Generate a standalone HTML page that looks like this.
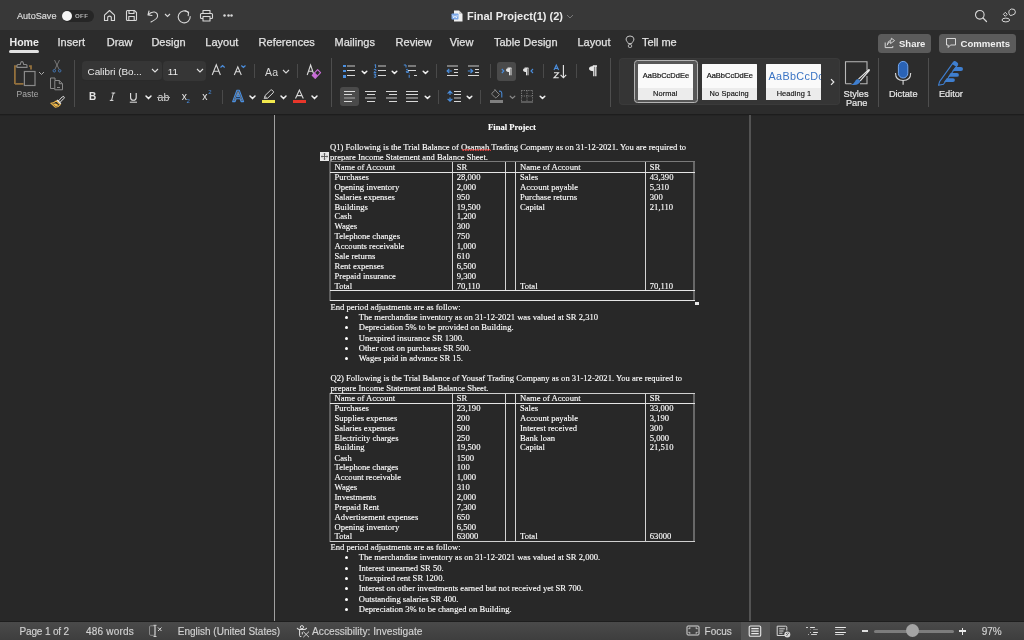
<!DOCTYPE html>
<html><head><meta charset="utf-8"><style>
*{box-sizing:border-box}
html,body{margin:0;padding:0;width:1024px;height:640px;overflow:hidden;background:#282828;font-family:"Liberation Sans",sans-serif}
.a{position:absolute}
.d{position:absolute;white-space:pre;font:8.6px/10px "Liberation Serif",serif;color:#ffffff;-webkit-text-stroke:0.12px #ffffff}
.ln{position:absolute}
.s{position:absolute;white-space:pre;font-family:"Liberation Sans",sans-serif;color:#e8e8e8}
svg{position:absolute;overflow:visible}
</style></head><body>
<div style="position:absolute;left:0;top:0;width:1024px;height:640px;will-change:transform">
<div class="a" style="left:0;top:0;width:1024px;height:30px;background:#383838"></div>
<div class="a" style="left:0;top:30px;width:1024px;height:84px;background:#2c2c2c"></div>
<div class="a" style="left:0;top:114px;width:1024px;height:1px;background:#1d1d1d"></div>
<div class="a" style="left:0;top:115px;width:1024px;height:1px;background:#242424"></div>
<div class="a" style="left:274px;top:115px;width:1px;height:506px;background:#a0a0a0"></div>
<div class="a" style="left:749px;top:115px;width:2px;height:506px;background:#535353"></div>
<div class="a" style="left:0;top:621px;width:1024px;height:1px;background:#1e1e1e"></div>
<div class="a" style="left:0;top:622px;width:1024px;height:18px;background:linear-gradient(#4a4a4a,#3e3e3e)"></div>
<div class="d" style="left:488px;top:122px;font-weight:bold">Final Project</div>
<div class="d" style="left:330px;top:142px;">Q1) Following is the Trial Balance of Osamah Trading Company as on 31-12-2021. You are required to</div>
<div class="d" style="left:330px;top:152px;">prepare Income Statement and Balance Sheet.</div>
<svg style="position:absolute;left:462px;top:147.5px" width="30" height="4" viewBox="0 0 30 4"><path d="M0 1 L1.25 3 L2.50 1 L3.75 3 L5.00 1 L6.25 3 L7.50 1 L8.75 3 L10.00 1 L11.25 3 L12.50 1 L13.75 3 L15.00 1 L16.25 3 L17.50 1 L18.75 3 L20.00 1 L21.25 3 L22.50 1 L23.75 3 L25.00 1 L26.25 3 L27.50 1 L28.75 3" fill="none" stroke="#e8403c" stroke-width="0.9"/></svg>
<div class="d" style="left:334.5px;top:162px;">Name of Account</div>
<div class="d" style="left:456.8px;top:162px;">SR</div>
<div class="d" style="left:520px;top:162px;">Name of Account</div>
<div class="d" style="left:649.8px;top:162px;">SR</div>
<div class="d" style="left:334.5px;top:172px;">Purchases</div>
<div class="d" style="left:456.8px;top:172px;">28,000</div>
<div class="d" style="left:334.5px;top:182px;">Opening inventory</div>
<div class="d" style="left:456.8px;top:182px;">2,000</div>
<div class="d" style="left:334.5px;top:192px;">Salaries expenses</div>
<div class="d" style="left:456.8px;top:192px;">950</div>
<div class="d" style="left:334.5px;top:202px;">Buildings</div>
<div class="d" style="left:456.8px;top:202px;">19,500</div>
<div class="d" style="left:334.5px;top:211px;">Cash</div>
<div class="d" style="left:456.8px;top:211px;">1,200</div>
<div class="d" style="left:334.5px;top:221px;">Wages</div>
<div class="d" style="left:456.8px;top:221px;">300</div>
<div class="d" style="left:334.5px;top:231px;">Telephone changes</div>
<div class="d" style="left:456.8px;top:231px;">750</div>
<div class="d" style="left:334.5px;top:241px;">Accounts receivable</div>
<div class="d" style="left:456.8px;top:241px;">1,000</div>
<div class="d" style="left:334.5px;top:251px;">Sale returns</div>
<div class="d" style="left:456.8px;top:251px;">610</div>
<div class="d" style="left:334.5px;top:261px;">Rent expenses</div>
<div class="d" style="left:456.8px;top:261px;">6,500</div>
<div class="d" style="left:334.5px;top:271px;">Prepaid insurance</div>
<div class="d" style="left:456.8px;top:271px;">9,300</div>
<div class="d" style="left:334.5px;top:281px;">Total</div>
<div class="d" style="left:456.8px;top:281px;">70,110</div>
<div class="d" style="left:520px;top:172px;">Sales</div>
<div class="d" style="left:649.8px;top:172px;">43,390</div>
<div class="d" style="left:520px;top:182px;">Account payable</div>
<div class="d" style="left:649.8px;top:182px;">5,310</div>
<div class="d" style="left:520px;top:192px;">Purchase returns</div>
<div class="d" style="left:649.8px;top:192px;">300</div>
<div class="d" style="left:520px;top:202px;">Capital</div>
<div class="d" style="left:649.8px;top:202px;">21,110</div>
<div class="d" style="left:520px;top:281px;">Total</div>
<div class="d" style="left:649.8px;top:281px;">70,110</div>
<div class="ln" style="left:330px;top:161px;width:365px;height:1px;background:#7a7a7a;z-index:1"></div>
<div class="ln" style="left:330px;top:172px;width:365px;height:1px;background:#e6e6e6;z-index:1"></div>
<div class="ln" style="left:330px;top:290px;width:365px;height:1px;background:#e6e6e6;z-index:1"></div>
<div class="ln" style="left:330px;top:300px;width:365px;height:1px;background:#e6e6e6;z-index:1"></div>
<div class="ln" style="left:329px;top:161px;width:2px;height:140px;background:#5e5e5e"></div>
<div class="ln" style="left:693px;top:161px;width:2px;height:140px;background:#686868"></div>
<div class="ln" style="left:452px;top:162px;width:1px;height:128px;background:#d4d4d4"></div>
<div class="ln" style="left:505px;top:162px;width:1px;height:128px;background:#d4d4d4"></div>
<div class="ln" style="left:515px;top:162px;width:1px;height:128px;background:#d4d4d4"></div>
<div class="ln" style="left:645px;top:162px;width:1px;height:128px;background:#d4d4d4"></div>
<div class="ln" style="left:320px;top:152px;width:9px;height:9px;background:#e8e8e8"></div>
<svg style="position:absolute;left:320px;top:152px" width="9" height="9" viewBox="0 0 9 9"><path d="M4.5 1.3 V7.7 M1.3 4.5 H7.7" stroke="#555" stroke-width="0.9"/><path d="M3.5 2.3 L4.5 1.2 L5.5 2.3 M3.5 6.7 L4.5 7.8 L5.5 6.7 M2.3 3.5 L1.2 4.5 L2.3 5.5 M6.7 3.5 L7.8 4.5 L6.7 5.5" fill="none" stroke="#555" stroke-width="0.7"/></svg>
<div class="ln" style="left:695px;top:301.5px;width:3.5px;height:3.5px;background:#e8e8e8"></div>
<div class="d" style="left:330.5px;top:302px;">End period adjustments are as follow:</div>
<div class="ln" style="left:344.9px;top:315.9px;width:3.6px;height:3.6px;border-radius:50%;background:#fff"></div>
<div class="d" style="left:358.7px;top:312px;">The merchandise inventory as on 31-12-2021 was valued at SR 2,310</div>
<div class="ln" style="left:344.9px;top:325.9px;width:3.6px;height:3.6px;border-radius:50%;background:#fff"></div>
<div class="d" style="left:358.7px;top:322px;">Depreciation 5% to be provided on Building.</div>
<div class="ln" style="left:344.9px;top:336.9px;width:3.6px;height:3.6px;border-radius:50%;background:#fff"></div>
<div class="d" style="left:358.7px;top:333px;">Unexpired insurance SR 1300.</div>
<div class="ln" style="left:344.9px;top:346.9px;width:3.6px;height:3.6px;border-radius:50%;background:#fff"></div>
<div class="d" style="left:358.7px;top:343px;">Other cost on purchases SR 500.</div>
<div class="ln" style="left:344.9px;top:356.9px;width:3.6px;height:3.6px;border-radius:50%;background:#fff"></div>
<div class="d" style="left:358.7px;top:353px;">Wages paid in advance SR 15.</div>
<div class="d" style="left:330.5px;top:373px;">Q2) Following is the Trial Balance of Yousaf Trading Company as on 31-12-2021. You are required to</div>
<div class="d" style="left:330.5px;top:383px;">prepare Income Statement and Balance Sheet.</div>
<div class="d" style="left:334.5px;top:393px;">Name of Account</div>
<div class="d" style="left:456.8px;top:393px;">SR</div>
<div class="d" style="left:520px;top:393px;">Name of Account</div>
<div class="d" style="left:649.8px;top:393px;">SR</div>
<div class="d" style="left:334.5px;top:403px;">Purchases</div>
<div class="d" style="left:456.8px;top:403px;">23,190</div>
<div class="d" style="left:334.5px;top:413px;">Supplies expenses</div>
<div class="d" style="left:456.8px;top:413px;">200</div>
<div class="d" style="left:334.5px;top:423px;">Salaries expenses</div>
<div class="d" style="left:456.8px;top:423px;">500</div>
<div class="d" style="left:334.5px;top:433px;">Electricity charges</div>
<div class="d" style="left:456.8px;top:433px;">250</div>
<div class="d" style="left:334.5px;top:442px;">Building</div>
<div class="d" style="left:456.8px;top:442px;">19,500</div>
<div class="d" style="left:334.5px;top:453px;">Cash</div>
<div class="d" style="left:456.8px;top:453px;">1500</div>
<div class="d" style="left:334.5px;top:462px;">Telephone charges</div>
<div class="d" style="left:456.8px;top:462px;">100</div>
<div class="d" style="left:334.5px;top:472px;">Account receivable</div>
<div class="d" style="left:456.8px;top:472px;">1,000</div>
<div class="d" style="left:334.5px;top:482px;">Wages</div>
<div class="d" style="left:456.8px;top:482px;">310</div>
<div class="d" style="left:334.5px;top:492px;">Investments</div>
<div class="d" style="left:456.8px;top:492px;">2,000</div>
<div class="d" style="left:334.5px;top:502px;">Prepaid Rent</div>
<div class="d" style="left:456.8px;top:502px;">7,300</div>
<div class="d" style="left:334.5px;top:512px;">Advertisement expenses</div>
<div class="d" style="left:456.8px;top:512px;">650</div>
<div class="d" style="left:334.5px;top:522px;">Opening inventory</div>
<div class="d" style="left:456.8px;top:522px;">6,500</div>
<div class="d" style="left:334.5px;top:531px;">Total</div>
<div class="d" style="left:456.8px;top:531px;">63000</div>
<div class="d" style="left:520px;top:403px;">Sales</div>
<div class="d" style="left:649.8px;top:403px;">33,000</div>
<div class="d" style="left:520px;top:413px;">Account payable</div>
<div class="d" style="left:649.8px;top:413px;">3,190</div>
<div class="d" style="left:520px;top:423px;">Interest received</div>
<div class="d" style="left:649.8px;top:423px;">300</div>
<div class="d" style="left:520px;top:433px;">Bank loan</div>
<div class="d" style="left:649.8px;top:433px;">5,000</div>
<div class="d" style="left:520px;top:442px;">Capital</div>
<div class="d" style="left:649.8px;top:442px;">21,510</div>
<div class="d" style="left:520px;top:531px;">Total</div>
<div class="d" style="left:649.8px;top:531px;">63000</div>
<div class="ln" style="left:330px;top:393px;width:365px;height:1px;background:#d0d0d0;z-index:1"></div>
<div class="ln" style="left:330px;top:403px;width:365px;height:1px;background:#e6e6e6;z-index:1"></div>
<div class="ln" style="left:330px;top:541px;width:365px;height:1px;background:#d0d0d0;z-index:1"></div>
<div class="ln" style="left:329px;top:393px;width:2px;height:149px;background:#5e5e5e"></div>
<div class="ln" style="left:693px;top:393px;width:2px;height:149px;background:#686868"></div>
<div class="ln" style="left:452px;top:394px;width:1px;height:147px;background:#d4d4d4"></div>
<div class="ln" style="left:505px;top:394px;width:1px;height:147px;background:#d4d4d4"></div>
<div class="ln" style="left:515px;top:394px;width:1px;height:147px;background:#d4d4d4"></div>
<div class="ln" style="left:645px;top:394px;width:1px;height:147px;background:#d4d4d4"></div>
<div class="d" style="left:330.5px;top:542px;">End period adjustments are as follow:</div>
<div class="ln" style="left:344.9px;top:555.9000000000001px;width:3.6px;height:3.6px;border-radius:50%;background:#fff"></div>
<div class="d" style="left:358.7px;top:552px;">The merchandise inventory as on 31-12-2021 was valued at SR 2,000.</div>
<div class="ln" style="left:344.9px;top:566.9000000000001px;width:3.6px;height:3.6px;border-radius:50%;background:#fff"></div>
<div class="d" style="left:358.7px;top:563px;">Interest unearned SR 50.</div>
<div class="ln" style="left:344.9px;top:576.9000000000001px;width:3.6px;height:3.6px;border-radius:50%;background:#fff"></div>
<div class="d" style="left:358.7px;top:573px;">Unexpired rent SR 1200.</div>
<div class="ln" style="left:344.9px;top:586.9000000000001px;width:3.6px;height:3.6px;border-radius:50%;background:#fff"></div>
<div class="d" style="left:358.7px;top:583px;">Interest on other investments earned but not received yet SR 700.</div>
<div class="ln" style="left:344.9px;top:597.9000000000001px;width:3.6px;height:3.6px;border-radius:50%;background:#fff"></div>
<div class="d" style="left:358.7px;top:594px;">Outstanding salaries SR 400.</div>
<div class="ln" style="left:344.9px;top:607.9000000000001px;width:3.6px;height:3.6px;border-radius:50%;background:#fff"></div>
<div class="d" style="left:358.7px;top:604px;">Depreciation 3% to be changed on Building.</div>
<div class="s" style="left:17px;top:11px;font-size:9.1px;line-height:10px;color:#dadada;font-weight:normal;-webkit-text-stroke:0.2px #dadada">AutoSave</div>
<div class="a" style="left:62px;top:10px;width:32px;height:12px;background:#262626;border-radius:6px;"></div>
<div class="a" style="left:62.2px;top:11px;width:10px;height:10px;background:#f4f4f4;border-radius:5px;"></div>
<div class="s" style="left:75px;top:12.2px;font-size:6.1px;line-height:7px;color:#b8b8b8;font-weight:bold;letter-spacing:0.35px">OFF</div>
<svg style="left:103.3px;top:9px" width="13" height="13" viewBox="0 0 13 13"><path d="M1.5 6.2 L6.5 1.5 L11.5 6.2 V11.5 H8.3 V8 Q6.5 6.3 4.7 8 V11.5 H1.5 Z" fill="none" stroke="#d8d8d8" stroke-width="1.1" stroke-linejoin="round"/></svg>
<svg style="left:125px;top:9px" width="13" height="13" viewBox="0 0 13 13"><path d="M1.5 2.5 Q1.5 1.5 2.5 1.5 H9.5 L11.5 3.5 V10.5 Q11.5 11.5 10.5 11.5 H2.5 Q1.5 11.5 1.5 10.5 Z" fill="none" stroke="#d8d8d8" stroke-width="1.1"/><path d="M4 1.5 V4.5 H9 V1.5 M3.8 11.5 V7.5 H9.2 V11.5" fill="none" stroke="#d8d8d8" stroke-width="1.1"/></svg>
<svg style="left:146px;top:9px" width="14" height="14" viewBox="0 0 14 14"><path d="M3 2 L2 6 L6 6.5 M2.3 5.8 Q5 2.5 8.5 3 Q12 4 11.5 7.5 Q11 10 5 13" fill="none" stroke="#d8d8d8" stroke-width="1.1" stroke-linecap="round" stroke-linejoin="round"/></svg>
<svg style="left:164px;top:13px" width="7" height="5" viewBox="0 0 7 5"><path d="M1 1 L3.5 3.5 L6 1" fill="none" stroke="#d8d8d8" stroke-width="1.1"/></svg>
<svg style="left:177px;top:9px" width="15" height="14" viewBox="0 0 15 14"><path d="M11.2 3.4 A6 6 0 1 0 13.2 7.5" fill="none" stroke="#d8d8d8" stroke-width="1.1" stroke-linecap="round"/><path d="M8.3 1.8 L11.6 3.3 L11.2 6.6" fill="none" stroke="#d8d8d8" stroke-width="1.1" stroke-linecap="round" stroke-linejoin="round"/></svg>
<svg style="left:199px;top:9px" width="15" height="14" viewBox="0 0 15 14"><path d="M4 4.5 V1.5 H11 V4.5 M4 9.5 H2.5 Q1.5 9.5 1.5 8.5 V5.5 Q1.5 4.5 2.5 4.5 H12.5 Q13.5 4.5 13.5 5.5 V8.5 Q13.5 9.5 12.5 9.5 H11 M4 7.5 H11 V12 H4 Z" fill="none" stroke="#d8d8d8" stroke-width="1.1" stroke-linejoin="round"/></svg>
<svg style="left:223.0px;top:14.2px" width="3" height="3" viewBox="0 0 3 3"><circle cx="1.5" cy="1.5" r="1.25" fill="#d8d8d8"/></svg>
<svg style="left:226.7px;top:14.2px" width="3" height="3" viewBox="0 0 3 3"><circle cx="1.5" cy="1.5" r="1.25" fill="#d8d8d8"/></svg>
<svg style="left:230.4px;top:14.2px" width="3" height="3" viewBox="0 0 3 3"><circle cx="1.5" cy="1.5" r="1.25" fill="#d8d8d8"/></svg>
<svg style="left:451px;top:10px" width="12" height="12" viewBox="0 0 12 12"><path d="M3 0.5 H8 L11.5 4 V11.5 H3 Z" fill="#f0f0f0"/><path d="M8 0.5 V4 H11.5" fill="#c8c8c8"/><rect x="0.5" y="3.5" width="7" height="6" rx="0.8" fill="#7aa7e8"/><path d="M1.8 5 L2.6 8 L4 5.8 L5.4 8 L6.2 5" fill="none" stroke="#fff" stroke-width="0.7"/></svg>
<div class="s" style="left:467px;top:10px;font-size:11px;line-height:12px;color:#ececec;font-weight:bold;">Final Project(1) (2)</div>
<svg style="left:566px;top:14px" width="8" height="5" viewBox="0 0 8 5"><path d="M1 1 L4 4 L7 1" fill="none" stroke="#777" stroke-width="1"/></svg>
<svg style="left:974px;top:9px" width="14" height="14" viewBox="0 0 14 14"><circle cx="5.8" cy="5.8" r="4.3" fill="none" stroke="#d8d8d8" stroke-width="1.1"/><path d="M9 9 L12.5 12.5" stroke="#d8d8d8" stroke-width="1.2" stroke-linecap="round"/></svg>
<svg style="left:1001px;top:8px" width="16" height="16" viewBox="0 0 16 16"><path d="M4.3 4.3 L6.2 6.3 L4.3 8.3 L2.4 6.3 Z" fill="none" stroke="#d8d8d8" stroke-width="1"/><ellipse cx="4.8" cy="12" rx="3.8" ry="1.9" fill="none" stroke="#d8d8d8" stroke-width="1"/><path d="M8 5.5 Q7.2 2 10.5 1 Q14.2 0.5 14.4 3.8 Q14.5 6.6 11.5 7 L9.3 7.6 Z" fill="none" stroke="#d8d8d8" stroke-width="1" stroke-linejoin="round"/></svg>
<div class="s" style="left:9.5px;top:36px;font-size:10.6px;line-height:12px;color:#ececec;font-weight:bold;">Home</div>
<div class="a" style="left:9px;top:50px;width:30px;height:2.6px;background:#e2e2e2;border-radius:1.5px;"></div>
<div class="s" style="left:57.5px;top:36px;font-size:11px;line-height:12px;color:#e2e2e2;font-weight:normal;-webkit-text-stroke:0.25px #e2e2e2">Insert</div>
<div class="s" style="left:106.7px;top:36px;font-size:11px;line-height:12px;color:#e2e2e2;font-weight:normal;-webkit-text-stroke:0.25px #e2e2e2">Draw</div>
<div class="s" style="left:151.4px;top:36px;font-size:11px;line-height:12px;color:#e2e2e2;font-weight:normal;-webkit-text-stroke:0.25px #e2e2e2">Design</div>
<div class="s" style="left:205.3px;top:36px;font-size:11px;line-height:12px;color:#e2e2e2;font-weight:normal;-webkit-text-stroke:0.25px #e2e2e2">Layout</div>
<div class="s" style="left:258.6px;top:36px;font-size:11px;line-height:12px;color:#e2e2e2;font-weight:normal;-webkit-text-stroke:0.25px #e2e2e2">References</div>
<div class="s" style="left:334.6px;top:36px;font-size:11px;line-height:12px;color:#e2e2e2;font-weight:normal;-webkit-text-stroke:0.25px #e2e2e2">Mailings</div>
<div class="s" style="left:395.6px;top:36px;font-size:11px;line-height:12px;color:#e2e2e2;font-weight:normal;-webkit-text-stroke:0.25px #e2e2e2">Review</div>
<div class="s" style="left:449.7px;top:36px;font-size:11px;line-height:12px;color:#e2e2e2;font-weight:normal;-webkit-text-stroke:0.25px #e2e2e2">View</div>
<div class="s" style="left:494px;top:36px;font-size:11px;line-height:12px;color:#e2e2e2;font-weight:normal;-webkit-text-stroke:0.25px #e2e2e2">Table Design</div>
<div class="s" style="left:577.5px;top:36px;font-size:11px;line-height:12px;color:#e2e2e2;font-weight:normal;-webkit-text-stroke:0.25px #e2e2e2">Layout</div>
<div class="s" style="left:641.9px;top:36px;font-size:11px;line-height:12px;color:#e2e2e2;font-weight:normal;-webkit-text-stroke:0.25px #e2e2e2">Tell me</div>
<svg style="left:625px;top:35px" width="10" height="14" viewBox="0 0 10 14"><path d="M3.3 8.6 Q3 7.6 2 6.5 Q1 5.3 1.1 3.9 Q1.4 1 5 1 Q8.6 1 8.9 3.9 Q9 5.3 8 6.5 Q7 7.6 6.7 8.6 Z" fill="none" stroke="#d8d8d8" stroke-width="0.9" stroke-linejoin="round"/><rect x="3.4" y="9.6" width="3.2" height="2.8" rx="1" fill="none" stroke="#d8d8d8" stroke-width="0.9"/></svg>
<div class="a" style="left:878px;top:33.6px;width:53px;height:19.4px;background:#5b5b5b;border-radius:3.5px;"></div>
<svg style="left:884px;top:37px" width="12" height="12" viewBox="0 0 12 12"><path d="M1.2 5.5 V10.6 H8.8 V9" fill="none" stroke="#d8d8d8" stroke-width="1"/><path d="M3.2 8.2 Q3.6 5.2 6.8 4.6 L6.5 6.6 L10.6 3.6 L7.4 1.2 L7.2 3 Q3.6 3.6 3.2 8.2Z" fill="none" stroke="#d8d8d8" stroke-width="0.9" stroke-linejoin="round"/></svg>
<div class="s" style="left:899px;top:38px;font-size:9.5px;line-height:11px;color:#f0f0f0;font-weight:bold;">Share</div>
<div class="a" style="left:939px;top:33.6px;width:77px;height:19.4px;background:#5b5b5b;border-radius:3.5px;"></div>
<svg style="left:945px;top:37px" width="12" height="12" viewBox="0 0 12 12"><path d="M1.5 1.5 H10.5 V8 H5.5 L3.2 10.5 V8 H1.5 Z" fill="none" stroke="#d8d8d8" stroke-width="1" stroke-linejoin="round"/></svg>
<div class="s" style="left:960.5px;top:38px;font-size:9.6px;line-height:11px;color:#f0f0f0;font-weight:bold;">Comments</div>
<svg style="left:12px;top:60px" width="26" height="28" viewBox="0 0 26 28"><path d="M2.9 24 V6.1 H5 M17.1 6.1 H19 V9.5 M2.9 23.9 H11.5" fill="none" stroke="#93703c" stroke-width="1.8"/><path d="M5 7.4 V5.5 Q5 4.5 6 4.5 H8.3 Q8.8 1.5 10 1.5 Q11.2 1.5 11.7 4.5 H14 Q15 4.5 15 5.5 V7.4 Z" fill="none" stroke="#8a8a8a" stroke-width="1.1"/><rect x="12.4" y="11.5" width="10.6" height="14" fill="none" stroke="#8a8a8a" stroke-width="1.2"/></svg>
<svg style="left:38px;top:71px" width="7" height="5" viewBox="0 0 7 5"><path d="M1 1 L3.5 3.5 L6 1" fill="none" stroke="#aaa" stroke-width="1"/></svg>
<div class="s" style="left:16.4px;top:89px;font-size:8.5px;line-height:10px;color:#ababab;font-weight:normal;letter-spacing:0.1px">Paste</div>
<svg style="left:51px;top:59px" width="12" height="15" viewBox="0 0 12 15"><path d="M3.5 1 L8.2 10.5 M8.5 1 L3.8 10.5" stroke="#8a8a8a" stroke-width="0.8"/><circle cx="3.3" cy="11.8" r="1.25" fill="none" stroke="#4479bb" stroke-width="0.9"/><circle cx="8.7" cy="11.8" r="1.25" fill="none" stroke="#4479bb" stroke-width="0.9"/></svg>
<svg style="left:49px;top:77px" width="15" height="14" viewBox="0 0 15 14"><path d="M5.5 11.5 H1.5 V1 H6 V3" fill="none" stroke="#8a8a8a" stroke-width="1"/><path d="M5.8 3.5 H10.3 L13.5 6.7 V12.8 H5.8 Z M10.3 3.5 V6.7 H13.5 M8 10.5 H11" fill="none" stroke="#8a8a8a" stroke-width="1"/></svg>
<svg style="left:49px;top:94px" width="16" height="14" viewBox="0 0 16 14"><path d="M9.2 7.2 L13.3 2.9 Q14.3 2 15 2.8 Q15.7 3.6 14.8 4.5 L10.8 8.6 Z" fill="none" stroke="#e8e8e8" stroke-width="1"/><path d="M8.6 5.6 L12.3 9.3 L11.2 10.4 L7.5 6.7 Z" fill="#e8e8e8"/><path d="M7.3 6.8 L11.2 10.6 Q9 13.3 6.5 13.3 L1.8 9.2 Q4.5 9.2 7.3 6.8Z" fill="none" stroke="#f0b94a" stroke-width="1.1" stroke-linejoin="round"/><path d="M3.5 9.8 L6.8 12.6 Q8.5 12 9.5 11 L6.8 9.5 Z" fill="#f0b94a"/></svg>
<div class="a" style="left:74px;top:60px;width:1px;height:47px;background:#4c4c4c;border-radius:0px;"></div>
<div class="a" style="left:331px;top:58px;width:1px;height:49px;background:#4e4e4e;border-radius:0px;"></div>
<div class="a" style="left:610px;top:58px;width:1px;height:49px;background:#4e4e4e;border-radius:0px;"></div>
<div class="a" style="left:878px;top:58px;width:1px;height:49px;background:#4e4e4e;border-radius:0px;"></div>
<div class="a" style="left:928px;top:58px;width:1px;height:49px;background:#4e4e4e;border-radius:0px;"></div>
<div class="a" style="left:82px;top:61.2px;width:79.5px;height:19.6px;background:#363636;border-radius:4px;border-bottom:1px solid #2a2a2a"></div>
<div class="s" style="left:87.5px;top:66px;font-size:9.9px;line-height:11px;color:#ececec;font-weight:normal;">Calibri (Bo...</div>
<svg style="left:151px;top:68px" width="8" height="6" viewBox="0 0 8 6"><path d="M1 1 L4 4 L7 1" fill="none" stroke="#e0e0e0" stroke-width="1.1"/></svg>
<div class="a" style="left:163.3px;top:61.2px;width:42.7px;height:19.6px;background:#363636;border-radius:4px;"></div>
<div class="s" style="left:167.7px;top:66px;font-size:9.9px;line-height:11px;color:#ececec;font-weight:normal;">11</div>
<svg style="left:196px;top:68px" width="8" height="6" viewBox="0 0 8 6"><path d="M1 1 L4 4 L7 1" fill="none" stroke="#e0e0e0" stroke-width="1.1"/></svg>
<svg style="left:211px;top:63px" width="15" height="13" viewBox="0 0 15 13"><path d="M1.2 12 L5.3 1.8 L9.4 12 M2.8 8.2 H7.8" fill="none" stroke="#d8d8d8" stroke-width="1.1"/><path d="M9.8 4.2 L11.6 2.5 L13.4 4.2" fill="none" stroke="#4b8fdf" stroke-width="1.2" stroke-linecap="round"/></svg>
<svg style="left:233px;top:63px" width="14" height="13" viewBox="0 0 14 13"><path d="M1.3 12 L4.8 3.8 L8.3 12 M2.6 8.8 H7" fill="none" stroke="#d8d8d8" stroke-width="1.1"/><path d="M8.6 2.8 L10.4 4.5 L12.2 2.8" fill="none" stroke="#4b8fdf" stroke-width="1.2" stroke-linecap="round"/></svg>
<div class="a" style="left:254px;top:64px;width:1px;height:14px;background:#4a4a4a;border-radius:0px;"></div>
<div class="s" style="left:265px;top:65.5px;font-size:10.5px;line-height:12px;color:#d8d8d8;font-weight:normal;letter-spacing:0.3px">Aa</div>
<svg style="left:282px;top:69px" width="8" height="6" viewBox="0 0 8 6"><path d="M1 1 L4 4 L7 1" fill="none" stroke="#d8d8d8" stroke-width="1.1"/></svg>
<div class="a" style="left:297px;top:64px;width:1px;height:14px;background:#4a4a4a;border-radius:0px;"></div>
<svg style="left:306px;top:63px" width="16" height="16" viewBox="0 0 16 16"><path d="M1.2 12 L4.6 2 L8 12 M2.4 8.2 H6.8" fill="none" stroke="#d8d8d8" stroke-width="1.1"/><path d="M6.2 12.3 L11.6 6.7 L14.6 9.7 L9.2 15.3 Z" fill="none" stroke="#c86dd7" stroke-width="1.1" stroke-linejoin="round"/><path d="M6.2 12.3 L8.8 9.6 L11.8 12.6 L9.2 15.3 Z" fill="#c86dd7"/></svg>
<div class="s" style="left:89px;top:91.2px;font-size:10px;line-height:11px;color:#e4e4e4;font-weight:bold;">B</div>
<svg style="left:109px;top:92px" width="7" height="10" viewBox="0 0 7 10"><path d="M2.6 1 H6.2 M0.8 8.4 H4.4 M4.4 1 L2.6 8.4" fill="none" stroke="#e0e0e0" stroke-width="1"/></svg>
<svg style="left:129px;top:92px" width="9" height="12" viewBox="0 0 9 12"><path d="M1.6 1 V5.4 Q1.6 8.3 4.4 8.3 Q7.2 8.3 7.2 5.4 V1" fill="none" stroke="#e4e4e4" stroke-width="1.1"/><path d="M0.8 10.2 H8" stroke="#e4e4e4" stroke-width="1"/></svg>
<svg style="left:145px;top:95px" width="7" height="5" viewBox="0 0 7 5"><path d="M1 1 L3.5 3.6 L6 1" fill="none" stroke="#f0f0f0" stroke-width="1.5" stroke-linecap="round" stroke-linejoin="round"/></svg>
<div class="s" style="left:157.5px;top:90.5px;font-size:10.6px;line-height:12px;color:#d4d4d4;font-weight:normal;">ab</div>
<div class="a" style="left:157px;top:97px;width:13px;height:0.8px;background:#b0b0b0;border-radius:0px;"></div>
<div class="s" style="left:181.8px;top:91.3px;font-size:10.4px;line-height:11px;color:#e4e4e4;font-weight:normal;">x</div>
<div class="s" style="left:186.5px;top:98.3px;font-size:6px;line-height:6px;color:#4b8fdf;font-weight:normal;">2</div>
<div class="s" style="left:202.3px;top:91.3px;font-size:10.4px;line-height:11px;color:#e4e4e4;font-weight:normal;">x</div>
<div class="s" style="left:208.3px;top:89.2px;font-size:6px;line-height:6px;color:#4b8fdf;font-weight:normal;">2</div>
<div class="a" style="left:222px;top:90px;width:1px;height:14px;background:#4a4a4a;border-radius:0px;"></div>
<svg style="left:231px;top:89px" width="15" height="14" viewBox="0 0 15 14"><path d="M1.6 12.6 L5.9 1.3 H8.3 L12.6 12.6 H10.1 L9.1 9.7 H5.1 L4.1 12.6 Z M5.9 7.4 H8.3 L7.1 4 Z" fill="#1f3f66" stroke="#4b8fdf" stroke-width="1.1" stroke-linejoin="round"/><path d="M3.2 11.8 L7.1 2.4 L11 11.8" fill="none" stroke="#9a9a9a" stroke-width="0.7"/></svg>
<svg style="left:249.3px;top:94.5px" width="7" height="5" viewBox="0 0 7 5"><path d="M1 1 L3.5 3.6 L6 1" fill="none" stroke="#f0f0f0" stroke-width="1.5" stroke-linecap="round" stroke-linejoin="round"/></svg>
<svg style="left:262px;top:89px" width="14" height="11" viewBox="0 0 14 11"><path d="M2.2 9.6 L3 6.6 L8.6 1.2 Q9.4 0.5 10.2 1.2 L11.2 2.2 Q11.9 3 11.2 3.8 L5.6 9.2 Z" fill="none" stroke="#d8d8d8" stroke-width="1"/><path d="M2.2 9.7 L3 6.6 L5.7 9.3 Z" fill="#9a9a9a"/></svg>
<div class="a" style="left:262px;top:100px;width:13.2px;height:3.2px;background:#f2e94e;border-radius:0px;"></div>
<svg style="left:280.3px;top:94.5px" width="7" height="5" viewBox="0 0 7 5"><path d="M1 1 L3.5 3.6 L6 1" fill="none" stroke="#f0f0f0" stroke-width="1.5" stroke-linecap="round" stroke-linejoin="round"/></svg>
<svg style="left:294px;top:89px" width="11" height="11" viewBox="0 0 11 11"><path d="M1.5 9.6 L5.4 1 L9.3 9.6 M2.9 6.6 H7.9" fill="none" stroke="#d8d8d8" stroke-width="1.1"/></svg>
<div class="a" style="left:292.8px;top:100px;width:13px;height:3.2px;background:#e8362a;border-radius:0px;"></div>
<svg style="left:310.5px;top:94.5px" width="7" height="5" viewBox="0 0 7 5"><path d="M1 1 L3.5 3.6 L6 1" fill="none" stroke="#f0f0f0" stroke-width="1.5" stroke-linecap="round" stroke-linejoin="round"/></svg>
<div class="a" style="left:343px;top:65.2px;width:3px;height:2px;background:#4b8fdf;border-radius:0px;"></div>
<div class="a" style="left:343px;top:69.8px;width:3px;height:2.2px;background:#4b8fdf;border-radius:0px;"></div>
<div class="a" style="left:343px;top:74.5px;width:3px;height:3px;background:#4b8fdf;border-radius:0px;"></div>
<div class="a" style="left:347.3px;top:65.2px;width:8px;height:1.6px;background:#7a7a7a;border-radius:0px;"></div>
<div class="a" style="left:347.3px;top:69.9px;width:8px;height:1.6px;background:#d8d8d8;border-radius:0px;"></div>
<div class="a" style="left:347.3px;top:74.8px;width:8px;height:1.6px;background:#d8d8d8;border-radius:0px;"></div>
<svg style="left:360.8px;top:69.5px" width="7" height="5" viewBox="0 0 7 5"><path d="M1.2 1.2 L3.5 3.4 L5.8 1.2" fill="none" stroke="#f0f0f0" stroke-width="1.5" stroke-linecap="round" stroke-linejoin="round"/></svg>
<svg style="left:372px;top:64px" width="6" height="14" viewBox="0 0 6 14"><path d="M2.5 1 L3.6 0.6 V4" fill="none" stroke="#4b8fdf" stroke-width="1"/><path d="M1.8 5.6 Q3 4.8 4 5.6 Q4.3 6.4 3 7.5 L1.8 8.6 H4.3" fill="none" stroke="#4b8fdf" stroke-width="1"/><path d="M1.8 10.2 H4 L2.9 11.4 Q4.4 11.6 4 12.8 Q3.3 13.8 1.8 13" fill="none" stroke="#4b8fdf" stroke-width="1"/></svg>
<div class="a" style="left:377.8px;top:65.2px;width:8px;height:1.6px;background:#7a7a7a;border-radius:0px;"></div>
<div class="a" style="left:377.8px;top:69.9px;width:8px;height:1.6px;background:#d8d8d8;border-radius:0px;"></div>
<div class="a" style="left:377.8px;top:74.8px;width:8px;height:1.6px;background:#d8d8d8;border-radius:0px;"></div>
<svg style="left:391.2px;top:69.5px" width="7" height="5" viewBox="0 0 7 5"><path d="M1.2 1.2 L3.5 3.4 L5.8 1.2" fill="none" stroke="#f0f0f0" stroke-width="1.5" stroke-linecap="round" stroke-linejoin="round"/></svg>
<svg style="left:402px;top:64px" width="8" height="14" viewBox="0 0 8 14"><path d="M1.8 1 H4 V3.5" fill="none" stroke="#4b8fdf" stroke-width="1"/><path d="M4.2 5.5 Q5.8 5 6.3 6 V8.6 M6.3 7 Q4 6.8 4 8 Q4.3 8.9 6.3 8.3" fill="none" stroke="#4b8fdf" stroke-width="1"/><path d="M7.2 10.8 V13.8" fill="none" stroke="#4b8fdf" stroke-width="1"/><circle cx="7.2" cy="9.6" r="0.4" fill="#4b8fdf"/></svg>
<div class="a" style="left:408px;top:65.2px;width:8px;height:1.6px;background:#7a7a7a;border-radius:0px;"></div>
<div class="a" style="left:408px;top:69.9px;width:8px;height:1.6px;background:#d8d8d8;border-radius:0px;"></div>
<div class="a" style="left:414px;top:74.8px;width:2.5px;height:1.6px;background:#d8d8d8;border-radius:0px;"></div>
<svg style="left:421.5px;top:69.5px" width="7" height="5" viewBox="0 0 7 5"><path d="M1.2 1.2 L3.5 3.4 L5.8 1.2" fill="none" stroke="#f0f0f0" stroke-width="1.5" stroke-linecap="round" stroke-linejoin="round"/></svg>
<div class="a" style="left:436px;top:64px;width:1px;height:14px;background:#4a4a4a;border-radius:0px;"></div>
<div class="a" style="left:446.8px;top:65.2px;width:11.7px;height:1.6px;background:#7a7a7a;border-radius:0px;"></div>
<div class="a" style="left:453.8px;top:68.9px;width:4.7px;height:1.6px;background:#d8d8d8;border-radius:0px;"></div>
<div class="a" style="left:453.8px;top:71.9px;width:4.7px;height:1.6px;background:#d8d8d8;border-radius:0px;"></div>
<div class="a" style="left:446.8px;top:74.8px;width:11.7px;height:1.6px;background:#d8d8d8;border-radius:0px;"></div>
<svg style="left:446px;top:68px" width="7" height="6" viewBox="0 0 7 6"><path d="M5.8 3 H1.2 M3.3 0.8 L1.1 3 L3.3 5.2" fill="none" stroke="#4b8fdf" stroke-width="1.2"/></svg>
<div class="a" style="left:467.8px;top:65.2px;width:11.7px;height:1.6px;background:#7a7a7a;border-radius:0px;"></div>
<div class="a" style="left:474.8px;top:68.9px;width:4.7px;height:1.6px;background:#d8d8d8;border-radius:0px;"></div>
<div class="a" style="left:474.8px;top:71.9px;width:4.7px;height:1.6px;background:#d8d8d8;border-radius:0px;"></div>
<div class="a" style="left:467.8px;top:74.8px;width:11.7px;height:1.6px;background:#d8d8d8;border-radius:0px;"></div>
<svg style="left:467px;top:68px" width="7" height="6" viewBox="0 0 7 6"><path d="M0.8 3 H5.6 M3.5 0.8 L5.7 3 L3.5 5.2" fill="none" stroke="#4b8fdf" stroke-width="1.2"/></svg>
<div class="a" style="left:490px;top:64px;width:1px;height:14px;background:#4a4a4a;border-radius:0px;"></div>
<div class="a" style="left:497px;top:62px;width:19px;height:18.7px;background:#4a4a4a;border-radius:3px;"></div>
<svg style="left:500px;top:66px" width="14" height="10" viewBox="0 0 14 10"><path d="M1.8 3 L3.8 5 L1.8 7" fill="none" stroke="#4b8fdf" stroke-width="1.1"/><path d="M7.6 2 H11.4 M9.5 2 V9.3 M11 2 V9.3" fill="none" stroke="#e2e2e2" stroke-width="1"/><path d="M9.5 2 Q6 2 6 4 Q6 6 9.5 6Z" fill="#e2e2e2"/></svg>
<svg style="left:521px;top:66px" width="14" height="10" viewBox="0 0 14 10"><path d="M12 3 L10 5 L12 7" fill="none" stroke="#4b8fdf" stroke-width="1.1"/><path d="M3.6 2 H7.4 M5.5 2 V9.3 M7 2 V9.3" fill="none" stroke="#e2e2e2" stroke-width="1"/><path d="M5.5 2 Q2 2 2 4 Q2 6 5.5 6Z" fill="#e2e2e2"/></svg>
<div class="a" style="left:543px;top:64px;width:1px;height:14px;background:#4a4a4a;border-radius:0px;"></div>
<svg style="left:552px;top:64px" width="16" height="15" viewBox="0 0 16 15"><path d="M2 6 L4.3 1 L6.6 6 M2.8 4.4 H5.8" fill="none" stroke="#4b8fdf" stroke-width="1.1"/><path d="M2 8.8 H6.5 L2 13.8 H6.7" fill="none" stroke="#e8e8e8" stroke-width="1.1"/><path d="M11.4 1 V13.6 M8.6 10.8 L11.4 13.8 L14.2 10.8" fill="none" stroke="#e8e8e8" stroke-width="1.1"/></svg>
<div class="a" style="left:576px;top:64px;width:1px;height:14px;background:#4a4a4a;border-radius:0px;"></div>
<svg style="left:588px;top:65px" width="10" height="12" viewBox="0 0 10 12"><path d="M4.8 1 H9 M5.8 1 V11.2 M7.8 1 V11.2" fill="none" stroke="#e8e8e8" stroke-width="1.3"/><path d="M5.8 1 Q1 1 1 3.6 Q1 6.2 5.8 6.2Z" fill="#e8e8e8"/></svg>
<div class="a" style="left:340px;top:87.1px;width:19px;height:18.8px;background:#4a4a4a;border-radius:3px;"></div>
<div class="a" style="left:344px;top:90.7px;width:11.2px;height:1.6px;background:#d8d8d8;border-radius:0px;"></div>
<div class="a" style="left:344px;top:93.7px;width:8px;height:1.6px;background:#d8d8d8;border-radius:0px;"></div>
<div class="a" style="left:344px;top:97.2px;width:11.2px;height:1.6px;background:#7a7a7a;border-radius:0px;"></div>
<div class="a" style="left:344px;top:100.7px;width:8px;height:1.6px;background:#d8d8d8;border-radius:0px;"></div>
<div class="a" style="left:364.9px;top:90.7px;width:11.2px;height:1.6px;background:#d8d8d8;border-radius:0px;"></div>
<div class="a" style="left:366.5px;top:93.7px;width:8px;height:1.6px;background:#d8d8d8;border-radius:0px;"></div>
<div class="a" style="left:364.9px;top:97.2px;width:11.2px;height:1.6px;background:#7a7a7a;border-radius:0px;"></div>
<div class="a" style="left:366.5px;top:100.7px;width:8px;height:1.6px;background:#d8d8d8;border-radius:0px;"></div>
<div class="a" style="left:385.8px;top:90.7px;width:11.2px;height:1.6px;background:#d8d8d8;border-radius:0px;"></div>
<div class="a" style="left:389.0px;top:93.7px;width:8px;height:1.6px;background:#d8d8d8;border-radius:0px;"></div>
<div class="a" style="left:385.8px;top:97.2px;width:11.2px;height:1.6px;background:#7a7a7a;border-radius:0px;"></div>
<div class="a" style="left:389.0px;top:100.7px;width:8px;height:1.6px;background:#d8d8d8;border-radius:0px;"></div>
<div class="a" style="left:406px;top:90.7px;width:12.0px;height:1.6px;background:#d8d8d8;border-radius:0px;"></div>
<div class="a" style="left:406px;top:93.7px;width:12.0px;height:1.6px;background:#d8d8d8;border-radius:0px;"></div>
<div class="a" style="left:406px;top:97.2px;width:12.0px;height:1.6px;background:#7a7a7a;border-radius:0px;"></div>
<div class="a" style="left:406px;top:100.7px;width:12.0px;height:1.6px;background:#d8d8d8;border-radius:0px;"></div>
<svg style="left:423.5px;top:95px" width="7" height="5" viewBox="0 0 7 5"><path d="M1.2 1.2 L3.5 3.4 L5.8 1.2" fill="none" stroke="#f0f0f0" stroke-width="1.5" stroke-linecap="round" stroke-linejoin="round"/></svg>
<div class="a" style="left:438px;top:90px;width:1px;height:14px;background:#4a4a4a;border-radius:0px;"></div>
<svg style="left:446px;top:89px" width="8" height="15" viewBox="0 0 8 15"><path d="M1.6 4.6 L4 2.2 L6.4 4.6 M4 2.6 V6" fill="none" stroke="#4b8fdf" stroke-width="1.2"/><path d="M1.6 9.8 L4 12.2 L6.4 9.8 M4 8.5 V12" fill="none" stroke="#4b8fdf" stroke-width="1.2"/></svg>
<div class="a" style="left:453.8px;top:90.7px;width:7.5px;height:1.6px;background:#d8d8d8;border-radius:0px;"></div>
<div class="a" style="left:453.8px;top:93.7px;width:7.5px;height:1.6px;background:#d8d8d8;border-radius:0px;"></div>
<div class="a" style="left:453.8px;top:97.2px;width:7.5px;height:1.6px;background:#7a7a7a;border-radius:0px;"></div>
<div class="a" style="left:453.8px;top:100.7px;width:7.5px;height:1.6px;background:#d8d8d8;border-radius:0px;"></div>
<svg style="left:465.8px;top:95px" width="7" height="5" viewBox="0 0 7 5"><path d="M1.2 1.2 L3.5 3.4 L5.8 1.2" fill="none" stroke="#f0f0f0" stroke-width="1.5" stroke-linecap="round" stroke-linejoin="round"/></svg>
<div class="a" style="left:480px;top:90px;width:1px;height:14px;background:#4a4a4a;border-radius:0px;"></div>
<svg style="left:490px;top:88px" width="14" height="12" viewBox="0 0 14 12"><path d="M5.2 2.2 L9.4 6.6 L6.4 9.6 Q5.8 10.2 5.2 9.6 L2 6.4 Q1.4 5.8 2 5.2 Z" fill="none" stroke="#8c8c8c" stroke-width="1" stroke-linejoin="round"/><path d="M4.6 1.2 L6 2.8" stroke="#8c8c8c" stroke-width="1"/><path d="M9 3.2 Q11.8 2.4 11.8 5 V9.5" fill="none" stroke="#4b8fdf" stroke-width="1"/></svg>
<div class="a" style="left:490px;top:100px;width:13px;height:3px;background:#808080;border-radius:0px;"></div>
<svg style="left:508.5px;top:95px" width="7" height="5" viewBox="0 0 7 5"><path d="M1.2 1.2 L3.5 3.4 L5.8 1.2" fill="none" stroke="#888" stroke-width="1.2" stroke-linecap="round" stroke-linejoin="round"/></svg>
<svg style="left:520px;top:89px" width="14" height="15" viewBox="0 0 14 15"><path d="M1.5 1.5 H12.5 M1.5 7 H12.5 M1.5 1.5 V12 M7 1.5 V12 M12.5 1.5 V12" fill="none" stroke="#8a8a8a" stroke-width="1" stroke-dasharray="1 1.3"/><path d="M1 13 H13" stroke="#707070" stroke-width="1.4"/></svg>
<svg style="left:538.8px;top:95px" width="7" height="5" viewBox="0 0 7 5"><path d="M1.2 1.2 L3.5 3.4 L5.8 1.2" fill="none" stroke="#f0f0f0" stroke-width="1.5" stroke-linecap="round" stroke-linejoin="round"/></svg>
<div class="a" style="left:619.4px;top:58.1px;width:220.5px;height:46.5px;background:#353535;border-radius:4px;box-shadow:inset 0 0 0 1px #3a3a3a"></div>
<div class="a" style="left:634px;top:60.1px;width:63.8px;height:42.8px;background:#575757;border-radius:3.5px;border:1px solid #b4b4b4"></div>
<div class="a" style="left:637.7px;top:63.8px;width:55.4px;height:36.3px;background:#fafafa;border-radius:0.5px;overflow:hidden"></div>
<div class="a" style="left:637.7px;top:87.7px;width:55.4px;height:12.4px;background:#ececec;border-radius:0px;"></div>
<div class="a" style="left:637.7px;top:63.8px;width:55.4px;height:23px;overflow:hidden"><div class="s" style="left:5.099999999999909px;top:7.200000000000003px;font-size:7.5px;line-height:9px;color:#151515;-webkit-text-stroke:0.2px #151515">AaBbCcDdEe</div></div>
<div class="s" style="left:653px;top:89px;font-size:7.4px;line-height:9px;color:#111;font-weight:normal;letter-spacing:0.1px;-webkit-text-stroke:0.15px #111">Normal</div>
<div class="a" style="left:702px;top:63.8px;width:55px;height:36.3px;background:#fafafa;border-radius:0.5px;overflow:hidden"></div>
<div class="a" style="left:702px;top:87.7px;width:55px;height:12.4px;background:#ececec;border-radius:0px;"></div>
<div class="a" style="left:702px;top:63.8px;width:55px;height:23px;overflow:hidden"><div class="s" style="left:4.7000000000000455px;top:7.200000000000003px;font-size:7.5px;line-height:9px;color:#151515;-webkit-text-stroke:0.2px #151515">AaBbCcDdEe</div></div>
<div class="s" style="left:709.6px;top:89px;font-size:7.4px;line-height:9px;color:#111;font-weight:normal;letter-spacing:0.1px;-webkit-text-stroke:0.15px #111">No Spacing</div>
<div class="a" style="left:766px;top:63.8px;width:55px;height:36.3px;background:#fafafa;border-radius:0.5px;overflow:hidden"></div>
<div class="a" style="left:766px;top:87.7px;width:55px;height:12.4px;background:#ececec;border-radius:0px;"></div>
<div class="a" style="left:766px;top:63.8px;width:55px;height:23px;overflow:hidden"><div class="s" style="left:2.5px;top:6.200000000000003px;font-size:10.8px;line-height:12px;color:#3a74c4;letter-spacing:0.35px">AaBbCcDc</div></div>
<div class="s" style="left:776.7px;top:89px;font-size:7.4px;line-height:9px;color:#111;font-weight:normal;letter-spacing:0.1px;-webkit-text-stroke:0.15px #111">Heading 1</div>
<svg style="left:829px;top:78px" width="7" height="8" viewBox="0 0 7 8"><path d="M2 1.2 L4.8 4 L2 6.8" fill="none" stroke="#e8e8e8" stroke-width="1.2"/></svg>
<svg style="left:843px;top:60px" width="28" height="27" viewBox="0 0 28 27"><path d="M2.5 23.8 V1.8 H24 V10.5 M24 16 V23.8 H17 M8.5 23.8 H2.5" fill="none" stroke="#b8b8b8" stroke-width="1.1"/><path d="M15.5 19.2 L25.6 9.8 Q26.5 9.3 26.3 10.4 L17.2 20.8" fill="none" stroke="#e8e8e8" stroke-width="1.1"/><path d="M15 19 Q12.5 19 12 21.5 Q11 24 7.5 24.7 Q12.5 25.8 15.2 24 Q17.2 22.5 17.5 21 Z" fill="#3f7fd0"/></svg>
<div class="s" style="left:843.5px;top:89px;font-size:9.2px;line-height:10px;color:#e8e8e8;font-weight:normal;-webkit-text-stroke:0.2px #e8e8e8">Styles</div>
<div class="s" style="left:845.9px;top:98px;font-size:9.2px;line-height:10px;color:#e8e8e8;font-weight:normal;-webkit-text-stroke:0.2px #e8e8e8">Pane</div>
<svg style="left:894px;top:60px" width="19" height="26" viewBox="0 0 19 26"><rect x="4.4" y="1.4" width="9.4" height="16.6" rx="4.7" fill="#2a63b6" stroke="#72a6ee" stroke-width="1"/><path d="M1.5 13 Q1.5 20.5 9.1 20.5 Q16.7 20.5 16.7 13" fill="none" stroke="#d8d8d8" stroke-width="1.1"/><path d="M9.1 20.5 V24.7" stroke="#d8d8d8" stroke-width="1.1"/></svg>
<div class="s" style="left:888.9px;top:89px;font-size:9.2px;line-height:10px;color:#e8e8e8;font-weight:normal;-webkit-text-stroke:0.2px #e8e8e8">Dictate</div>
<svg style="left:936px;top:59px" width="28" height="28" viewBox="0 0 28 28"><path d="M2.5 26.3 L3.6 22.6 L17.4 3.4 Q18.4 2.2 19.7 3 L21.2 4.1 Q22.2 5 21.4 6.2 L7.5 25.2 Z" fill="none" stroke="#3f7fd0" stroke-width="1.1" stroke-linejoin="round"/><path d="M17.2 3.6 Q18.4 2 19.8 2.9 L21.3 4 Q22.3 5 21.5 6.2 L20.3 7.8 L16 4.9Z" fill="#3f7fd0"/><path d="M19.2 7.9 H25 Q27 7.9 27 9.9 Q27 11.9 25 11.9 H16.3 Z M14.7 14 H21 Q22.9 14 22.9 15.9 Q22.9 17.8 21 17.8 H12 Z M10.7 19.2 H17 Q18.9 19.2 18.9 21.1 Q18.9 23 17 23 H8 Z" fill="#3f7fd0"/></svg>
<div class="s" style="left:938.9px;top:89px;font-size:9.2px;line-height:10px;color:#e8e8e8;font-weight:normal;-webkit-text-stroke:0.2px #e8e8e8">Editor</div>
<div class="s" style="left:19.5px;top:625.6px;font-size:10px;line-height:11px;color:#d2d2d2;font-weight:normal;letter-spacing:-0.15px;-webkit-text-stroke:0.15px #d2d2d2">Page 1 of 2</div>
<div class="s" style="left:86px;top:625.6px;font-size:10px;line-height:11px;color:#d2d2d2;font-weight:normal;letter-spacing:0.2px;-webkit-text-stroke:0.15px #d2d2d2">486 words</div>
<svg style="left:148px;top:624px" width="16" height="14" viewBox="0 0 16 14"><rect x="1.5" y="1.8" width="5.5" height="9.5" rx="1.2" fill="none" stroke="#8a8a8a" stroke-width="1"/><path d="M5.5 1.3 H8.5 M7 1.3 V12.5 M5.5 12.5 H8.5" fill="none" stroke="#d8d8d8" stroke-width="0.9"/><path d="M10 3.5 L13.5 7 M13.5 3.5 L10 7" stroke="#d8d8d8" stroke-width="1"/></svg>
<div class="s" style="left:177.8px;top:625.6px;font-size:10px;line-height:11px;color:#d2d2d2;font-weight:normal;-webkit-text-stroke:0.15px #d2d2d2">English (United States)</div>
<svg style="left:295px;top:623.5px" width="16" height="15" viewBox="0 0 16 15"><circle cx="6.9" cy="3.2" r="1.6" fill="none" stroke="#e0e0e0" stroke-width="1"/><path d="M2.3 4.3 Q3.2 6 6.9 5.4 Q10.6 6 11.5 4.3" fill="none" stroke="#e0e0e0" stroke-width="1.1" stroke-linecap="round"/><path d="M4.6 6 V11.6 Q4.6 13.2 6 12.6 M7.3 8.5 V10" fill="none" stroke="#e0e0e0" stroke-width="1" stroke-linecap="round"/><path d="M8.3 7.6 L14 13.2 M14 7.6 L8.3 13.2" stroke="#e0e0e0" stroke-width="0.9"/></svg>
<div class="s" style="left:312px;top:625.6px;font-size:10.2px;line-height:11px;color:#d2d2d2;font-weight:normal;-webkit-text-stroke:0.15px #d2d2d2">Accessibility: Investigate</div>
<svg style="left:686px;top:625px" width="14" height="11" viewBox="0 0 14 11"><rect x="1" y="1" width="12" height="9" rx="1" fill="none" stroke="#d8d8d8" stroke-width="1"/><path d="M3 4.2 V3 H4.5 M9.5 3 H11 V4.2 M11 6.8 V8 H9.5 M4.5 8 H3 V6.8" fill="none" stroke="#d8d8d8" stroke-width="0.9"/></svg>
<div class="s" style="left:704.6px;top:625.6px;font-size:10px;line-height:11px;color:#d2d2d2;font-weight:normal;-webkit-text-stroke:0.15px #d2d2d2">Focus</div>
<div class="a" style="left:740.5px;top:622px;width:29.5px;height:18px;background:#545454;border-radius:0px;"></div>
<svg style="left:748px;top:625px" width="14" height="12" viewBox="0 0 14 12"><rect x="1.2" y="1" width="11.5" height="10.2" rx="1.3" fill="none" stroke="#e8e8e8" stroke-width="1.1"/><path d="M3.3 3.6 H10.7 M3.3 6.1 H10.7 M3.3 8.6 H10.7" stroke="#e8e8e8" stroke-width="1.2"/></svg>
<svg style="left:776px;top:625px" width="16" height="13" viewBox="0 0 16 13"><path d="M9 10.5 H1.2 V1.2 H9.8 Q10.8 1.2 10.8 2.2 V5.5" fill="none" stroke="#d8d8d8" stroke-width="1"/><path d="M3.2 3.8 H8.8 M3.2 6 H7.5 M3.2 8.2 H6.5" stroke="#d8d8d8" stroke-width="1"/><circle cx="11.3" cy="9.5" r="3" fill="#d8d8d8"/><path d="M10 8 L11.5 9.5 L10.5 11 M12 7.5 L12.5 9" stroke="#444" stroke-width="0.8" fill="none"/></svg>
<div class="a" style="left:805.9px;top:626.7px;width:1.8999999999999773px;height:1.3px;background:#e8e8e8;border-radius:0.6px;"></div>
<div class="a" style="left:809.7px;top:626.7px;width:5.2999999999999545px;height:1.3px;background:#e8e8e8;border-radius:0.6px;"></div>
<div class="a" style="left:809.8px;top:629.2px;width:1.2000000000000455px;height:1.3px;background:#8a8a8a;border-radius:0.6px;"></div>
<div class="a" style="left:813px;top:629.2px;width:5px;height:1.3px;background:#8a8a8a;border-radius:0.6px;"></div>
<div class="a" style="left:809.7px;top:631.7px;width:1.5px;height:1.3px;background:#e8e8e8;border-radius:0.6px;"></div>
<div class="a" style="left:813px;top:631.7px;width:5.2000000000000455px;height:1.3px;background:#e8e8e8;border-radius:0.6px;"></div>
<div class="a" style="left:807.8px;top:633.9px;width:1.7000000000000455px;height:1.3px;background:#cfcfcf;border-radius:0.6px;"></div>
<div class="a" style="left:811px;top:633.9px;width:6px;height:1.3px;background:#cfcfcf;border-radius:0.6px;"></div>
<div class="a" style="left:835px;top:626.7px;width:11.200000000000045px;height:1.3px;background:#ececec;border-radius:0.6px;"></div>
<div class="a" style="left:835px;top:629.2px;width:9px;height:1.3px;background:#8a8a8a;border-radius:0.6px;"></div>
<div class="a" style="left:835px;top:631.7px;width:11px;height:1.3px;background:#ececec;border-radius:0.6px;"></div>
<div class="a" style="left:835px;top:633.9px;width:9px;height:1.3px;background:#cfcfcf;border-radius:0.6px;"></div>
<div class="a" style="left:861.9px;top:630.3px;width:6px;height:2px;background:#e0e0e0;border-radius:0px;"></div>
<div class="a" style="left:873.8px;top:630px;width:80px;height:3.3px;background:#7c7c7c;border-radius:2px;"></div>
<div class="a" style="left:906px;top:624px;width:13px;height:13px;background:#a4a4a4;border-radius:7px;"></div>
<div class="a" style="left:958.8px;top:630.3px;width:7.2px;height:1.8px;background:#e8e8e8;border-radius:0px;"></div>
<div class="a" style="left:961.5px;top:627.5px;width:1.8px;height:7.4px;background:#e8e8e8;border-radius:0px;"></div>
<div class="s" style="left:981.7px;top:625.6px;font-size:10px;line-height:11px;color:#d2d2d2;font-weight:normal;-webkit-text-stroke:0.15px #d2d2d2">97%</div>
</div>
</body></html>
